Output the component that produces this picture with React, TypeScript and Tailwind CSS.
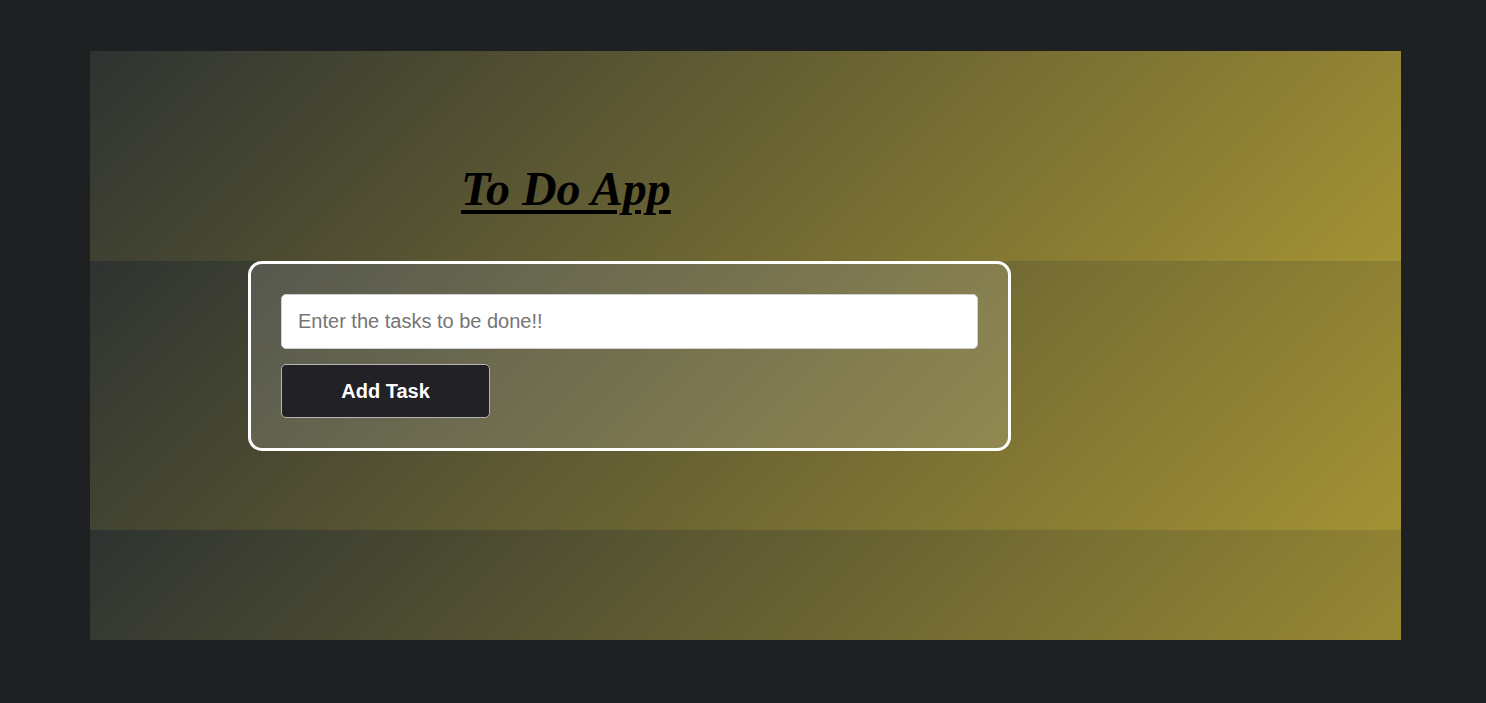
export default function App() {
  const band = "bg-[linear-gradient(135deg,#2e3331,#a39234)]";
  return (
    <div className="min-h-[703px] w-full bg-[#1e2022] pt-[51px] pl-[90px] pr-[85px] font-['Liberation_Sans',Arial,sans-serif]">
      <div className="flex w-[1311px] flex-col">
        <div className={`${band} h-[210px] pl-[371px] pt-[111px]`}>
          <h1 className="font-['Liberation_Serif','Times_New_Roman',serif] text-[48px] leading-[53px] font-bold italic text-black underline decoration-[4px] underline-offset-[5px]">
            To Do App
          </h1>
        </div>
        <div className={`${band} h-[269px] pl-[158px]`}>
          <div className="flex w-[763px] flex-col gap-[15px] rounded-[14px] border-[3px] border-white bg-white/[0.14] p-[30px]">
            <input
              type="text"
              placeholder="Enter the tasks to be done!!"
              className="h-[55px] w-[697px] rounded-[5px] border border-[#cfcfcf] bg-white px-[16px] text-[20px] text-black outline-none placeholder:text-[#757575]"
            />
            <button className="h-[54px] w-[209px] rounded-[5px] border border-[#b5b5b5] bg-[#222126] text-[20px] font-bold text-white">
              Add Task
            </button>
          </div>
        </div>
        <div className="h-[110px] bg-[linear-gradient(135deg,#2e3331,#a39234)] bg-[length:100%_269px] bg-top bg-no-repeat" />
      </div>
    </div>
  );
}
